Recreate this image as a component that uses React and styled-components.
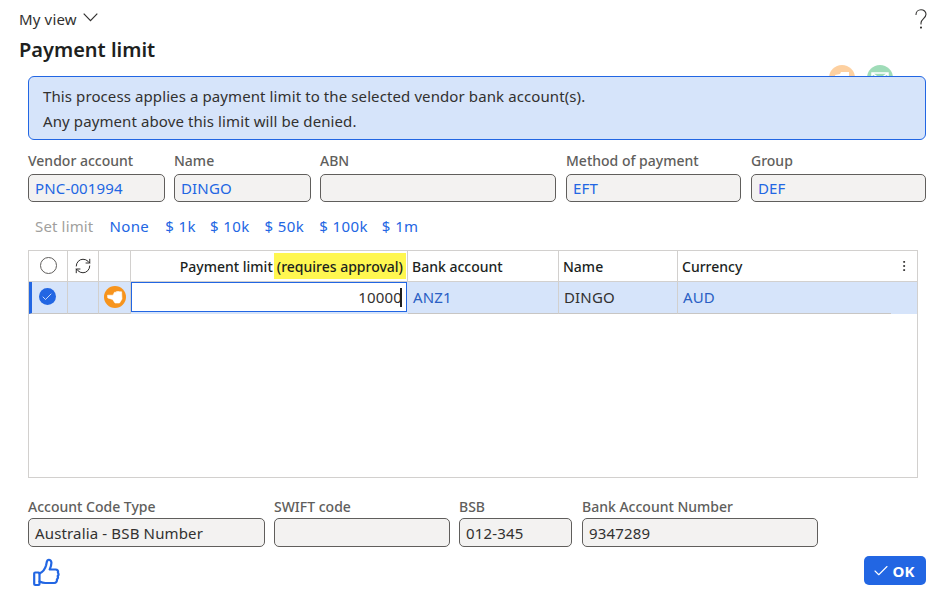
import React from 'react';
import styled, { createGlobalStyle } from 'styled-components';
import { RefreshCw, EllipsisVertical, Check } from 'lucide-react';

const GlobalStyle = createGlobalStyle`
  html, body {
    margin: 0;
    padding: 0;
    background: #fff;
  }
  body {
    font-family: "Noto Sans", "Open Sans", "Liberation Sans", sans-serif;
    font-size: 15px;
    letter-spacing: 0.15px;
    color: #323130;
  }
  * { box-sizing: border-box; }
`;

const Page = styled.div`
  width: 945px;
  height: 608px;
  padding: 9px 19px 0 19px;
  overflow: hidden;
`;

const TopBar = styled.div`
  display: flex;
  justify-content: space-between;
  align-items: center;
  height: 20px;
`;

const ViewPicker = styled.div`
  display: flex;
  align-items: center;
  gap: 6px;
  color: #323130;
`;

const Chevron = styled.svg`
  margin-top: -3px;
`;

const HelpMark = styled.svg`
  margin-right: -1px;
  color: #323130;
`;

const Title = styled.h1`
  margin: 7px 0 0;
  font-size: 20px;
  line-height: 27px;
  font-weight: 600;
  letter-spacing: 0;
  color: #201f1e;
`;

const Content = styled.div`
  margin: 13px 0 0 9px;
  width: 898px;
`;

const InfoWrap = styled.div`
  position: relative;
  isolation: isolate;
`;

const FadedBadge = styled.svg`
  position: absolute;
  top: -11px;
  left: ${p => p.$left}px;
  z-index: -1;
`;

const InfoBox = styled.div`
  height: 64px;
  padding: 7px 14px;
  background: #d6e4fa;
  border: 1px solid #2266e3;
  border-radius: 6px;
  line-height: 25px;
  letter-spacing: 0.1px;
  color: #323130;
`;

const FieldRow = styled.div`
  display: grid;
  grid-template-columns: ${p => p.$cols};
  column-gap: 9px;
  margin-top: ${p => p.$top}px;
`;

const Field = styled.div`
  display: flex;
  flex-direction: column;
  padding-left: ${p => (p.$inset ? 1 : 0)}px;
`;

const Label = styled.label`
  height: ${p => (p.$tall ? 23 : 21)}px;
  line-height: 20px;
  font-size: 14px;
  font-weight: 500;
  letter-spacing: 0;
  color: #605e5c;
  white-space: nowrap;
`;

const ValueBox = styled.div`
  height: ${p => p.$height || 28}px;
  padding: 0 6px;
  display: flex;
  align-items: center;
  background: #f3f2f1;
  border: 1px solid #605e5c;
  border-radius: 5px;
  color: ${p => (p.$link ? '#2266e3' : '#323130')};
`;

const LimitBar = styled.div`
  display: flex;
  align-items: center;
  height: 20px;
  margin: 14px 0 14px;
  padding-left: 7px;
`;

const LimitCaption = styled.span`
  color: #a19f9d;
  margin-right: 16px;
`;

const LimitLink = styled.a`
  color: #2266e3;
  letter-spacing: 0.4px;
  margin-right: ${p => p.$gap}px;
  white-space: nowrap;
`;

const GridFrame = styled.div`
  width: 890px;
  height: 228px;
  border: 1px solid #d2d0ce;
`;

const COLS = '39px 31px 32px 277px 151px 119px 213px 26px';

const HeaderRow = styled.div`
  display: grid;
  grid-template-columns: ${COLS};
  height: 31px;
  border-bottom: 1px solid #d2d0ce;
`;

const HeaderCell = styled.div`
  display: flex;
  align-items: center;
  justify-content: ${p => (p.$center ? 'center' : p.$right ? 'flex-end' : 'flex-start')};
  padding: ${p => (p.$right ? '0 1px 0 0' : p.$center ? '0' : '0 4px')};
  border-right: ${p => (p.$last ? 'none' : '1px solid #d2d0ce')};
  font-size: 14px;
  font-weight: 500;
  letter-spacing: 0;
  color: #201f1e;
  white-space: nowrap;
`;

const Highlight = styled.span`
  display: flex;
  align-items: center;
  height: 26px;
  margin-left: 1px;
  padding: 0 3px;
  background: #fff750;
`;

const DataRow = styled.div`
  display: grid;
  grid-template-columns: ${COLS};
  height: 32px;
  background: #d6e4fa;
`;

const DataCell = styled.div`
  display: flex;
  align-items: center;
  justify-content: ${p => (p.$center ? 'center' : 'flex-start')};
  padding: 0 ${p => (p.$center ? 0 : 5)}px 2px;
  border-right: ${p => (p.$noRight ? 'none' : '1px solid #d2d0ce')};
  border-bottom: ${p => (p.$noBottom ? 'none' : '1px solid #c8c6c4')};
  color: ${p => (p.$link ? '#2a5fc4' : '#323130')};
`;

const InputCell = styled.div`
  display: flex;
  align-items: flex-start;
`;

const MarkerCell = styled(DataCell)`
  border-left: 3px solid #2266e3;
  padding-right: 5px;
`;

const LimitInput = styled.div`
  display: flex;
  align-items: center;
  justify-content: flex-end;
  height: 30px;
  width: 276px;
  padding-right: 4px;
  background: #fff;
  border: 1px solid #2266e3;
  color: #323130;
`;

const Caret = styled.span`
  width: 2px;
  height: 19px;
  margin-left: -2px;
  background: #201f1e;
`;

const RadioRing = styled.span`
  width: 17px;
  height: 17px;
  margin-bottom: 2px;
  border-radius: 50%;
  border: 1px solid #605e5c;
  background: #fff;
`;

const CheckDot = styled.span`
  display: flex;
  align-items: center;
  justify-content: center;
  width: 17px;
  height: 17px;
  border-radius: 50%;
  background: #2266e3;
  color: #fff;
`;

const Footer = styled.div`
  display: flex;
  justify-content: space-between;
  align-items: flex-start;
  margin-top: 9px;
`;

const ThumbButton = styled.button`
  display: flex;
  padding: 0;
  margin: 2px 0 0 5px;
  border: none;
  background: none;
  color: #2266e3;
`;

const OkButton = styled.button`
  display: flex;
  align-items: center;
  justify-content: center;
  gap: 3px;
  width: 62px;
  height: 29px;
  padding: 0 4px 0 0;
  border: none;
  border-radius: 5px;
  background: #2266e3;
  color: #fff;
  font-family: inherit;
  font-size: 15px;
  font-weight: 700;
`;

const HandBadge = () => (
  <svg width="22" height="22" viewBox="0 0 22 22">
    <circle cx="11" cy="11" r="11" fill="#f7941d" />
    <path
      d="M3.5 9.2H9L10.5 6.2H12.5V5.6H15V5.8H17.6L18 13L15.5 17H11L8.6 13.4L3.8 12Z"
      fill="#fff"
      stroke="#fff"
      strokeWidth="0.6"
      strokeLinejoin="round"
    />
  </svg>
);

const ThumbIcon = () => (
  <svg width="27" height="29" viewBox="0 0 27 29" fill="none" stroke="currentColor" strokeWidth="2.2" strokeLinejoin="round" strokeLinecap="round">
    <rect x="1.2" y="14.5" width="5.3" height="12.5" rx="1" />
    <path d="M6.5 15.5c3.4-1.6 5.8-5 6.6-8.2.4-1.8.4-3.6 1.4-5 1.4-1.2 3.4-.2 3.8 1.6.5 2.6-.6 5.2-1.6 7.6h5.8c2 0 3 1.6 2.4 3.2.8 1.1.7 2.5-.2 3.4.5 1.2.2 2.5-.8 3.2.3 1.8-.7 3.7-2.8 3.7h-8.8c-2 0-3.4-.4-5.8-1.5" />
  </svg>
);

const App = () => {
  const limits = [
    { label: 'None', gap: 16 },
    { label: '$ 1k', gap: 14 },
    { label: '$ 10k', gap: 15 },
    { label: '$ 50k', gap: 15 },
    { label: '$ 100k', gap: 14 },
    { label: '$ 1m', gap: 0 },
  ];

  return (
    <Page>
      <GlobalStyle />
      <TopBar>
        <ViewPicker>
          My view
          <Chevron width="15" height="9" viewBox="0 0 15 9" fill="none" stroke="currentColor" strokeWidth="1.2">
            <path d="M.7.7l6.8 7 6.8-7" />
          </Chevron>
        </ViewPicker>
        <HelpMark width="12" height="20" viewBox="0 0 12 20" fill="none" stroke="currentColor" strokeWidth="1.1" strokeLinecap="round">
          <path d="M1 5.5C1 2.7 3.2.7 6 .7s5 2 5 4.6c0 4-5 4.6-5 8.7v1" />
          <circle cx="6" cy="18.6" r="0.5" fill="currentColor" />
        </HelpMark>
      </TopBar>
      <Title>Payment limit</Title>
      <Content>
        <InfoWrap>
          <FadedBadge $left={801} width="26" height="26" viewBox="0 0 26 26">
            <circle cx="13" cy="13" r="13" fill="#fdd0a0" />
            <path d="M6 10l5-1 1-2 8 0v10H8z" fill="#fff" />
          </FadedBadge>
          <FadedBadge $left={839} width="26" height="26" viewBox="0 0 26 26">
            <circle cx="13" cy="13" r="13" fill="#9fdcb8" />
            <path d="M5 8h16v11H5zM5 8l8 6 8-6" fill="none" stroke="#fff" strokeWidth="1.5" />
          </FadedBadge>
          <InfoBox>
            This process applies a payment limit to the selected vendor bank account(s).
            <br />
            Any payment above this limit will be denied.
          </InfoBox>
        </InfoWrap>

        <FieldRow $cols="137px 137px 236px 176px 176px" $top={11}>
          <Field>
            <Label $tall>Vendor account</Label>
            <ValueBox $link>PNC-001994</ValueBox>
          </Field>
          <Field>
            <Label $tall>Name</Label>
            <ValueBox $link>DINGO</ValueBox>
          </Field>
          <Field>
            <Label $tall>ABN</Label>
            <ValueBox />
          </Field>
          <Field $inset>
            <Label $tall>Method of payment</Label>
            <ValueBox $link>EFT</ValueBox>
          </Field>
          <Field $inset>
            <Label $tall>Group</Label>
            <ValueBox $link>DEF</ValueBox>
          </Field>
        </FieldRow>

        <LimitBar>
          <LimitCaption>Set limit</LimitCaption>
          {limits.map(item => (
            <LimitLink key={item.label} $gap={item.gap}>{item.label}</LimitLink>
          ))}
        </LimitBar>

        <GridFrame>
          <HeaderRow>
            <HeaderCell $center><RadioRing /></HeaderCell>
            <HeaderCell $center><RefreshCw size={18} strokeWidth={1.25} /></HeaderCell>
            <HeaderCell />
            <HeaderCell $right>
              Payment limit
              <Highlight>(requires approval)</Highlight>
            </HeaderCell>
            <HeaderCell>Bank account</HeaderCell>
            <HeaderCell>Name</HeaderCell>
            <HeaderCell $last>Currency</HeaderCell>
            <HeaderCell $center $last><EllipsisVertical size={14} strokeWidth={1.5} /></HeaderCell>
          </HeaderRow>
          <DataRow>
            <MarkerCell $center>
              <CheckDot><Check size={12} strokeWidth={1.5} /></CheckDot>
            </MarkerCell>
            <DataCell $center />
            <DataCell $center><HandBadge /></DataCell>
            <InputCell>
              <LimitInput>
                10000
                <Caret />
              </LimitInput>
            </InputCell>
            <DataCell $link>ANZ1</DataCell>
            <DataCell>DINGO</DataCell>
            <DataCell $link $noRight>AUD</DataCell>
            <DataCell $noRight $noBottom />
          </DataRow>
        </GridFrame>

        <FieldRow $cols="237px 176px 113px 237px" $top={19}>
          <Field>
            <Label>Account Code Type</Label>
            <ValueBox $height={29}>Australia - BSB Number</ValueBox>
          </Field>
          <Field>
            <Label>SWIFT code</Label>
            <ValueBox $height={29} />
          </Field>
          <Field>
            <Label>BSB</Label>
            <ValueBox $height={29}>012-345</ValueBox>
          </Field>
          <Field $inset>
            <Label>Bank Account Number</Label>
            <ValueBox $height={29}>9347289</ValueBox>
          </Field>
        </FieldRow>

        <Footer>
          <ThumbButton><ThumbIcon /></ThumbButton>
          <OkButton>
            <Check size={18} strokeWidth={1.5} />
            OK
          </OkButton>
        </Footer>
      </Content>
    </Page>
  );
};

export default App;
